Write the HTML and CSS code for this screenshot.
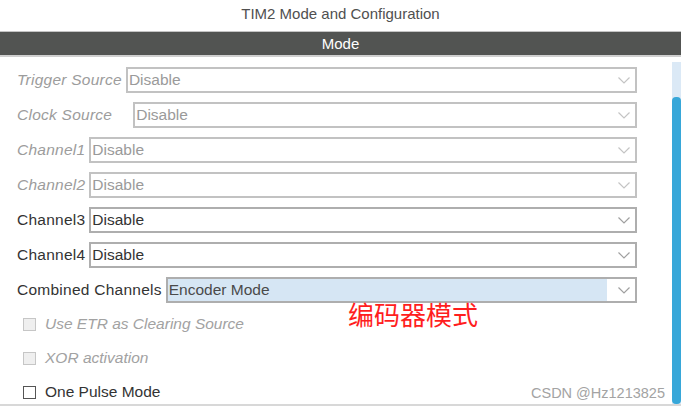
FILE: index.html
```html
<!DOCTYPE html>
<html lang="en">
<head>
<meta charset="utf-8">
<title>TIM2 Mode and Configuration</title>
<link rel="stylesheet" href="styles.css">
</head>
<body>
<div class="page">
  <div class="title">TIM2 Mode and Configuration</div>
  <div class="bar">Mode</div>
  <div class="content">
    <div class="form">
      <div class="row disabled">
        <span class="label">Trigger Source</span>
        <div class="select"><span class="value">Disable</span><svg class="chev" viewBox="0 0 12 7"><path d="M0.5 0.5 L6 6 L11.5 0.5"/></svg></div>
      </div>
      <div class="row disabled">
        <span class="label label-wide">Clock Source</span>
        <div class="select"><span class="value">Disable</span><svg class="chev" viewBox="0 0 12 7"><path d="M0.5 0.5 L6 6 L11.5 0.5"/></svg></div>
      </div>
      <div class="row disabled">
        <span class="label">Channel1</span>
        <div class="select"><span class="value">Disable</span><svg class="chev" viewBox="0 0 12 7"><path d="M0.5 0.5 L6 6 L11.5 0.5"/></svg></div>
      </div>
      <div class="row disabled">
        <span class="label">Channel2</span>
        <div class="select"><span class="value">Disable</span><svg class="chev" viewBox="0 0 12 7"><path d="M0.5 0.5 L6 6 L11.5 0.5"/></svg></div>
      </div>
      <div class="row">
        <span class="label">Channel3</span>
        <div class="select"><span class="value">Disable</span><svg class="chev" viewBox="0 0 12 7"><path d="M0.5 0.5 L6 6 L11.5 0.5"/></svg></div>
      </div>
      <div class="row">
        <span class="label">Channel4</span>
        <div class="select"><span class="value">Disable</span><svg class="chev" viewBox="0 0 12 7"><path d="M0.5 0.5 L6 6 L11.5 0.5"/></svg></div>
      </div>
      <div class="row">
        <span class="label">Combined Channels</span>
        <div class="select selected"><span class="value">Encoder Mode</span><span class="arrow-area"><svg class="chev" viewBox="0 0 12 7"><path d="M0.5 0.5 L6 6 L11.5 0.5"/></svg></span></div>
      </div>
      <div class="checks">
        <div class="check-row disabled">
          <span class="box"></span><span class="check-label">Use ETR as Clearing Source</span>
        </div>
        <div class="check-row disabled">
          <span class="box"></span><span class="check-label">XOR activation</span>
        </div>
        <div class="check-row">
          <span class="box"></span><span class="check-label">One Pulse Mode</span>
        </div>
      </div>
      <div class="note">编码器模式</div>
      <div class="watermark">CSDN @Hz1213825</div>
    </div>
    <div class="scrollbar"><div class="thumb"></div></div>
  </div>
</div>
</body>
</html>
```
FILE: styles.css
```css
html, body {
  margin: 0;
  padding: 0;
  background: #ffffff;
}
.page {
  width: 681px;
  height: 406px;
  overflow: hidden;
  font-family: "Liberation Sans", Arial, sans-serif;
  display: flex;
  flex-direction: column;
}
.title {
  flex-shrink: 0;
  height: 31px;
  line-height: 28px;
  text-align: center;
  font-size: 15px;
  color: #505050;
}
.bar {
  flex-shrink: 0;
  height: 23px;
  line-height: 23px;
  background: #525452;
  border-top: 1px solid #c4c4c4;
  border-bottom: 2px solid #cfcfcf;
  color: #ffffff;
  text-align: center;
  font-size: 15px;
}
.content {
  flex: 1;
  display: flex;
  border-bottom: 2px solid #d8d8d8;
  min-height: 0;
}
.form {
  flex: 1;
  position: relative;
  padding: 10px 35px 0 17px;
  display: flex;
  flex-direction: column;
  gap: 9px;
}
.row {
  flex-shrink: 0;
  display: flex;
  align-items: center;
  height: 26px;
}
.label {
  font-size: 15.5px;
  letter-spacing: 0.25px;
  color: #333333;
  margin-right: 4px;
  white-space: nowrap;
}
.label-wide {
  margin-right: 21px;
}
.row.disabled .label {
  font-style: italic;
  color: #9c9c9c;
}
.select {
  flex: 1;
  height: 26px;
  box-sizing: border-box;
  border: 2px solid #aeaeae;
  display: flex;
  align-items: center;
  padding-left: 1px;
  background: #ffffff;
}
.row.disabled .select {
  border-color: #c2c2c2;
}
.value {
  flex: 1;
  font-size: 15.5px;
  color: #333333;
}
.row.disabled .value {
  color: #9a9a9a;
}
.chev {
  width: 12px;
  height: 7px;
  margin-right: 5px;
  fill: none;
  stroke: #a0a0a0;
  stroke-width: 1.2;
}
.row.disabled .chev {
  stroke: #c4c4c4;
}
.select.selected {
  background: #d6e6f4;
  padding-right: 0;
}
.select.selected .value {
  color: #4a4a4a;
}
.arrow-area {
  width: 28px;
  align-self: stretch;
  background: #ffffff;
  display: flex;
  align-items: center;
  justify-content: flex-end;
}
.checks {
  flex-shrink: 0;
  display: flex;
  flex-direction: column;
  margin-top: -5px;
}
.check-row {
  flex-shrink: 0;
  display: flex;
  align-items: center;
  height: 34px;
  padding-left: 6px;
}
.box {
  width: 13px;
  height: 13px;
  box-sizing: border-box;
  border: 1px solid #555555;
  background: #ffffff;
  margin-right: 9px;
}
.check-row.disabled .box {
  border-color: #c6c6c6;
  background: #efefef;
}
.check-label {
  font-size: 15.5px;
  color: #333333;
}
.check-row.disabled .check-label {
  font-style: italic;
  color: #a2a2a2;
}
.note {
  position: absolute;
  left: 348px;
  top: 241px;
  font-family: "Noto Sans CJK SC", sans-serif;
  font-size: 26px;
  line-height: 32px;
  color: #ff1e1e;
}
.watermark {
  position: absolute;
  right: 7px;
  bottom: 3px;
  font-size: 14.5px;
  color: #a3a3a3;
}
.scrollbar {
  flex-shrink: 0;
  width: 9px;
  margin-top: 5px;
  background: #dbe9f6;
  display: flex;
  flex-direction: column;
  justify-content: flex-end;
}
.thumb {
  height: 307px;
  background: #37a7d9;
  border-radius: 4px;
}
```
